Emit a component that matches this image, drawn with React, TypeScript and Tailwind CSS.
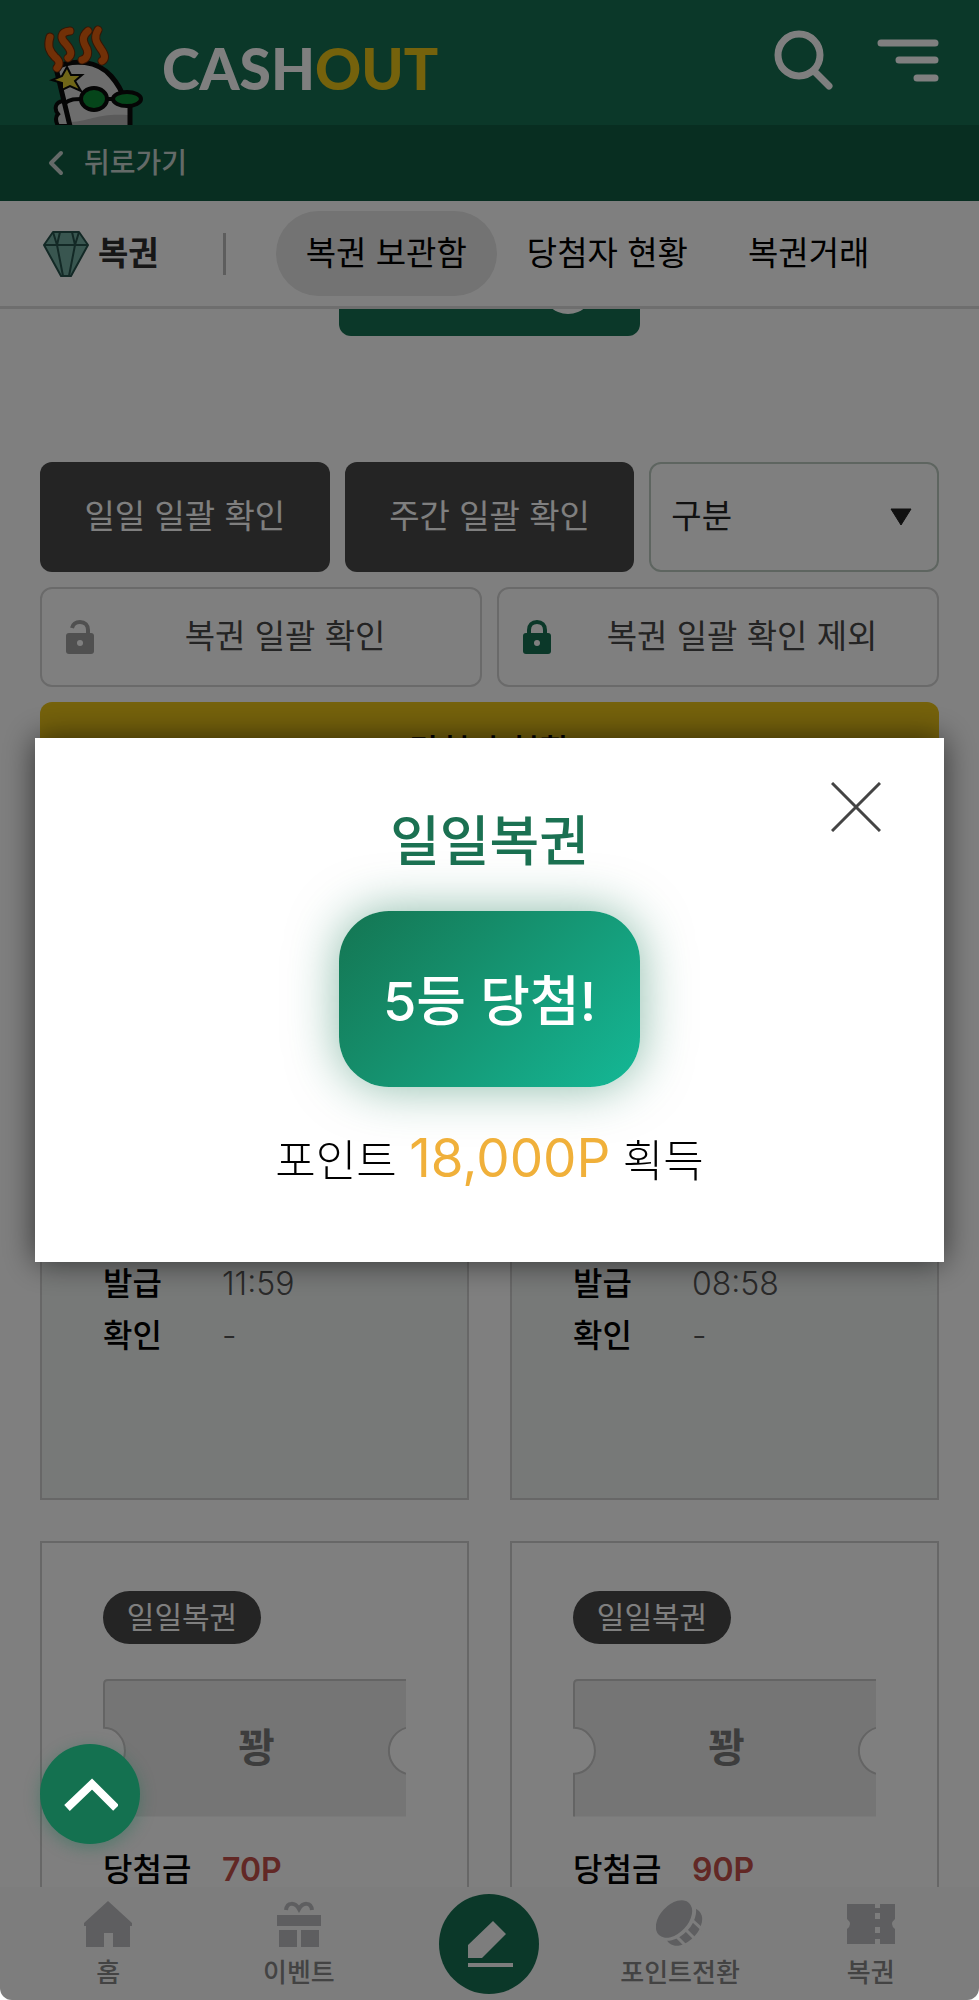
import { useState } from 'react';
import type { ReactNode } from 'react';

type Ticket = {
  id: number;
  prize?: string;
  issued?: string;
  checked?: string;
  opened: boolean;
};

const tickets: Ticket[] = [
  { id: 1, issued: '11:59', checked: '-', opened: false },
  { id: 2, issued: '08:58', checked: '-', opened: false },
  { id: 3, prize: '70P', opened: true },
  { id: 4, prize: '90P', opened: true },
];

const tabs = ['복권 보관함', '당첨자 현황', '복권거래'];

const Flames = () => (
  <>
    <path d="M10 12C7 22 10 27 15 32C20 36 20 39 17 43" />
    <path d="M30 6C20 7 20 13 26 19C32 26 32 30 28 33" />
    <path d="M48 6C41 12 43 17 47 24C49 30 46 34 42 35" />
    <path d="M58 5C53 13 57 18 61 24C66 31 65 34 62 36" />
  </>
);

const Mascot = () => (
  <svg className="h-[100px] w-[106px]" viewBox="0 0 106 100" fill="none" aria-hidden="true">
    <path d="M23 76C15 77 14 84 18 89C15 92 16 97 18 101H29" fill="#cfcfcf" stroke="#0a0a0a" strokeWidth="4" />
    <path d="M15 44C34 34 58 36 71 51C79 60 83 70 84 79L91 84V101H31L21 67Z" fill="#dadada" />
    <path d="M31 101V97C50 96 58 88 88 90V101Z" fill="#b4b4b4" />
    <path d="M14 43C34 33 58 36 71 51C78 59 82 66 84 74M90 82V101M16 43L30 101" stroke="#0a0a0a" strokeWidth="5" />
    <g stroke="#6b2a08" strokeWidth="9" strokeLinecap="round" strokeLinejoin="round">
      <Flames />
    </g>
    <g stroke="#e2600f" strokeWidth="7" strokeLinecap="round" strokeLinejoin="round">
      <Flames />
    </g>
    <path d="M25 78C30 74 35 74 42 74M66 74H74" stroke="#0a0a0a" strokeWidth="4" />
    <ellipse cx="54" cy="74" rx="13" ry="11" fill="#0b8a34" stroke="#0a0a0a" strokeWidth="4" />
    <ellipse cx="87" cy="74" rx="14" ry="7" fill="#0b8a34" stroke="#0a0a0a" strokeWidth="4" />
    <path d="M27 42L31 50L42 50L35 56L41 66L30 61L22 65L22 58L12 55L22 51Z" fill="#e0cc30" stroke="#0a0a0a" strokeWidth="2" />
  </svg>
);

const Diamond = () => (
  <svg className="h-12 w-12" viewBox="0 0 48 48" fill="#72aca0" stroke="#26524c" strokeWidth="2" strokeLinejoin="round" aria-hidden="true">
    <path d="M11 2H37L46 15L29 46H19L2 15Z" />
    <path d="M2 15H46M11 2L15 15L21 46M37 2L33 15L27 46M18 2L15 15M30 2L33 15" fill="none" />
  </svg>
);

const Lock = ({ open = false }: { open?: boolean }) => (
  <svg className={open ? 'h-9 w-8 text-[#a0a0a0]' : 'h-9 w-8 text-[#167052]'} viewBox="0 0 32 36" fill="none" aria-hidden="true">
    {open ? (
      <path d="M8 9C9 5 12 3 16 3C21 3 24 6 24 11V16" stroke="currentColor" strokeWidth="4" />
    ) : (
      <path d="M8 16V11C8 6 11 3 16 3C21 3 24 6 24 11V16" stroke="currentColor" strokeWidth="4" />
    )}
    <rect x="2" y="14" width="28" height="21" rx="3" fill="currentColor" />
    <circle cx="16" cy="24" r="3" fill="#fff" />
  </svg>
);

const TicketShape = () => (
  <div className="relative mt-[35px] w-[304px] max-w-full">
    <svg className="block w-full" viewBox="0 0 304 138" fill="none" aria-hidden="true">
      <path d="M1 138V95A21 23 0 0 0 1 49V5Q1 1 5 1H304V49A24 24 0 0 0 304 95V138Z" fill="#ebebeb" />
      <path d="M1 138V95A21 23 0 0 0 1 49V5Q1 1 5 1H304M304 49A24 24 0 0 0 304 95" stroke="#c8c8c8" strokeWidth="2" />
    </svg>
    <span className="absolute inset-0 flex items-center justify-center pl-1 text-[40px] font-bold text-[#7a7a7a]">꽝</span>
  </div>
);

const Row = ({ label, children }: { label: string; children: ReactNode }) => (
  <div className="flex h-[52px] items-center">
    <dt className="w-[119px] text-[32px] font-medium text-black">{label}</dt>
    <dd className="text-[32px] font-light text-[#555]">{children}</dd>
  </div>
);

const TicketCard = ({ ticket }: { ticket: Ticket }) => (
  <li
    className={
      ticket.opened
        ? 'min-h-[610px] border-2 border-[#cfcfcf] bg-white px-[61px] pt-12'
        : 'min-h-[610px] border-2 border-[#cfcfcf] bg-[#eff2f1] px-[61px] pt-[113px]'
    }
  >
    <span className="flex h-[53px] w-[158px] items-center justify-center rounded-full bg-[#484848] text-[30px] text-white">일일복권</span>
    <TicketShape />
    <dl className="mt-[27px]">
      {ticket.prize && (
        <Row label="당첨금">
          <span className="font-semibold text-[#c4504b]">{ticket.prize}</span>
        </Row>
      )}
      {ticket.issued && <Row label="발급">{ticket.issued}</Row>}
      {ticket.checked && <Row label="확인">{ticket.checked}</Row>}
    </dl>
  </li>
);

const HomeIcon = () => (
  <svg className="h-12 w-12" viewBox="0 0 48 48" fill="currentColor" aria-hidden="true">
    <path d="M24 1L48 23V26H46V47H29V33H20V47H2V26H0V23Z" />
  </svg>
);

const GiftIcon = () => (
  <svg className="h-12 w-12" viewBox="0 0 48 48" fill="currentColor" aria-hidden="true">
    <path d="M11 10C12 2 20 2 24 9C28 2 36 2 37 10" fill="none" stroke="currentColor" strokeWidth="4" />
    <path d="M2 15H46V26H2ZM4 30H22V47H4ZM26 30H44V47H26Z" />
  </svg>
);

const CoinIcon = () => (
  <svg className="h-12 w-12" viewBox="0 0 48 48" fill="currentColor" aria-hidden="true">
    <ellipse cx="28" cy="27" rx="22" ry="14" transform="rotate(-47 28 27)" />
    <ellipse cx="19" cy="19" rx="25" ry="17" transform="rotate(-47 19 19)" fill="#fafafa" />
    <ellipse cx="18" cy="19" rx="22" ry="14" transform="rotate(-47 18 19)" />
    <path d="M29 29L42 42M36 20L50 33M20 36L34 50" stroke="#fafafa" strokeWidth="3" />
  </svg>
);

const CouponIcon = () => (
  <svg className="h-12 w-12" viewBox="0 0 48 48" fill="currentColor" aria-hidden="true">
    <path d="M0 4H28V8H33V4H48V19Q42 24 48 29V44H33V39H28V44H0V29Q6 24 0 19Z" />
    <path d="M28 13H33V19H28ZM28 27H33V33H28Z" fill="#fafafa" />
  </svg>
);

const NavItem = ({ label, icon }: { label: string; icon: ReactNode }) => (
  <a href="#" className="flex flex-1 flex-col items-center pt-[13px] text-[#bcbdc0]">
    {icon}
    <span className="mt-[5px] text-[26px] leading-10 font-medium text-[#868686]">{label}</span>
  </a>
);

const App = () => {
  const [open, setOpen] = useState(true);
  const [tab, setTab] = useState(tabs[0]);

  return (
    <div className="bg-white font-['Inter','Noto_Sans_CJK_KR',sans-serif]">
      <div className="flex h-screen flex-col overflow-hidden rounded-b-xl bg-white">
        <header className="flex h-[125px] shrink-0 items-end justify-between bg-[#167052] px-10">
          <a href="#" className="flex items-end" aria-label="CASHOUT">
            <Mascot />
            <span className="mb-[14px] ml-4 font-['Lato','Inter',sans-serif] text-[57px] font-black text-white">
              CASH<span className="text-[#ebc418]">OUT</span>
            </span>
          </a>
          <div className="flex items-start gap-11 self-start pt-[29px]">
            <button type="button" aria-label="검색">
              <svg className="h-[62px] w-[62px]" viewBox="0 0 62 62" fill="none" stroke="#fff" strokeWidth="7" strokeLinecap="round" aria-hidden="true">
                <circle cx="28" cy="26" r="21" />
                <path d="M44 43L58 57" />
              </svg>
            </button>
            <button type="button" aria-label="메뉴">
              <svg className="h-[62px] w-[62px]" viewBox="0 0 62 62" fill="none" stroke="#fff" strokeWidth="7" strokeLinecap="round" aria-hidden="true">
                <path d="M4 14H58M22 31H58M40 49H58" />
              </svg>
            </button>
          </div>
        </header>

        <div className="flex h-[76px] shrink-0 items-center bg-[#105c42] px-10">
          <a href="#" className="flex items-center text-[#c8d5d0]">
            <svg className="mx-2 h-7 w-4" viewBox="0 0 16 28" fill="none" stroke="currentColor" strokeWidth="4" strokeLinecap="round" strokeLinejoin="round" aria-hidden="true">
              <path d="M13 4L3 14L13 24" />
            </svg>
            <span className="ml-3 text-[28px] font-medium">뒤로가기</span>
          </a>
        </div>

        <nav className="flex h-[108px] shrink-0 items-center border-b-[3px] border-[#dcdcdc] px-[42px]">
          <Diamond />
          <h1 className="ml-2 text-[33px] font-bold text-[#2e2e2e]">복권</h1>
          <span className="mr-[50px] ml-16 h-[42px] w-[3px] bg-[#bbb]" />
          {tabs.map((name) => (
            <button
              key={name}
              type="button"
              onClick={() => setTab(name)}
              className={
                name === tab
                  ? 'h-[85px] rounded-full bg-[#e6e6e6] px-[30px] text-[33px] text-black'
                  : 'h-[85px] rounded-full px-[30px] text-[33px] text-black'
              }
            >
              {name}
            </button>
          ))}
        </nav>

        <main className="min-h-0 flex-1 overflow-y-auto px-10 [scrollbar-width:none]">
          <div className="-mt-[69px] flex justify-center">
            <button type="button" aria-label="복권 확인" className="flex h-24 w-[301px] items-center justify-end rounded-xl bg-[#167052] pr-[46px]">
              <span className="h-[52px] w-[52px] rounded-full bg-white" />
            </button>
          </div>

          <div className="mt-[126px] grid grid-cols-3 gap-[15px]">
            <button type="button" className="h-[110px] rounded-xl bg-[#484848] text-[33px] text-white">일일 일괄 확인</button>
            <button type="button" className="h-[110px] rounded-xl bg-[#484848] text-[33px] text-white">주간 일괄 확인</button>
            <div className="relative">
              <select aria-label="구분" className="h-[110px] w-full appearance-none rounded-xl border-2 border-[#bccac1] bg-white px-5 text-[33px] text-[#222]">
                <option>구분</option>
                <option>일일복권</option>
                <option>주간복권</option>
              </select>
              <svg className="pointer-events-none absolute top-[46px] right-[27px] h-[18px] w-[22px]" viewBox="0 0 22 18" fill="#222" aria-hidden="true">
                <path d="M1 1H21L11 17Z" stroke="#222" strokeWidth="1" strokeLinejoin="round" />
              </svg>
            </div>
          </div>

          <div className="mt-[15px] grid grid-cols-2 gap-[15px]">
            <button type="button" className="flex h-[100px] items-center gap-4 rounded-xl border-2 border-[#d4d4d4] px-[22px] text-[33px] text-[#484848]">
              <Lock open />
              <span className="flex-1">복권 일괄 확인</span>
            </button>
            <button type="button" className="flex h-[100px] items-center gap-4 rounded-xl border-2 border-[#d4d4d4] px-[22px] text-[33px] text-[#484848]">
              <Lock />
              <span className="flex-1">복권 일괄 확인 제외</span>
            </button>
          </div>

          <button type="button" className="mt-[15px] h-[100px] w-full rounded-xl bg-[#ebc418] text-[33px] font-medium text-black">당첨자 현황</button>

          <ul className="mt-[88px] grid grid-cols-2 gap-[41px]">
            {tickets.map((ticket) => (
              <TicketCard key={ticket.id} ticket={ticket} />
            ))}
          </ul>
        </main>

        <nav className="flex h-[113px] shrink-0 bg-[#fafafa] px-[13px]">
          <NavItem label="홈" icon={<HomeIcon />} />
          <NavItem label="이벤트" icon={<GiftIcon />} />
          <div className="flex flex-1 justify-center pt-[7px]">
            <button type="button" aria-label="글쓰기" className="flex h-[100px] w-[100px] items-center justify-center rounded-full bg-[#167052]">
              <svg className="h-12 w-12" viewBox="0 0 48 48" fill="#fafafa" aria-hidden="true">
                <path d="M28 1L41 14L17 38H3V25ZM3 43H48V47H3Z" />
              </svg>
            </button>
          </div>
          <NavItem label="포인트전환" icon={<CoinIcon />} />
          <NavItem label="복권" icon={<CouponIcon />} />
        </nav>
      </div>

      {open && (
        <div className="fixed inset-0 z-10 flex items-center justify-center rounded-b-xl bg-black/50 px-[35px]">
          <section role="dialog" aria-modal="true" aria-labelledby="result-title" className="relative flex w-full flex-col items-center bg-white pt-[68px] pb-[65px] shadow-[0_0_30px_rgba(0,0,0,0.6)]">
            <button type="button" aria-label="닫기" onClick={() => setOpen(false)} className="absolute top-11 right-[63px]">
              <svg className="h-[50px] w-[50px]" viewBox="0 0 50 50" fill="none" stroke="#444" strokeWidth="3" aria-hidden="true">
                <path d="M1 1L49 49M49 1L1 49" />
              </svg>
            </button>
            <h2 id="result-title" className="text-[54px] leading-[72px] font-medium text-[#1b7152]">일일복권</h2>
            <div className="mt-[33px] flex h-44 w-[301px] items-center justify-center rounded-[50px] bg-linear-135 from-[#147552] to-[#14b896] pt-1 text-[54px] font-medium text-white shadow-[0_0_50px_rgba(20,117,82,0.5)]">
              5등 당첨!
            </div>
            <p className="mt-[35px] text-[44px] leading-[72px] font-light text-black">
              포인트 <span className="text-[53px] font-normal text-[#f0b03a]">18,000P</span> 획득
            </p>
          </section>
        </div>
      )}

      <button type="button" aria-label="맨 위로" className="fixed bottom-[156px] left-10 z-20 flex h-[100px] w-[100px] items-center justify-center rounded-full bg-[#147150] shadow-[0_4px_16px_rgba(20,113,80,0.4)]">
        <svg className="h-9 w-14" viewBox="0 0 56 36" fill="none" stroke="#fff" strokeWidth="8" aria-hidden="true">
          <path d="M5 32L30 8L54 32" />
        </svg>
      </button>
    </div>
  );
};

export default App;
